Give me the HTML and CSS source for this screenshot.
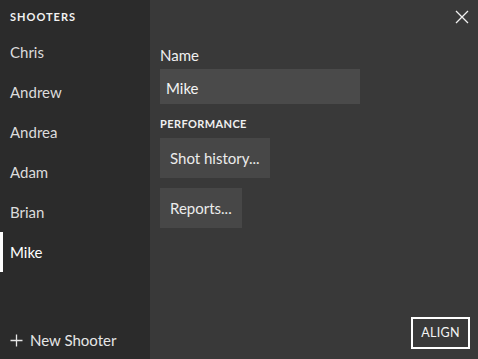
FILE: index.html
```html
<!DOCTYPE html>
<html>
<head>
<meta charset="utf-8">
<link rel="stylesheet" href="styles.css">
</head>
<body>
<div class="app">
  <aside class="sidebar">
    <div class="sidebar-title">SHOOTERS</div>
    <ul class="list">
      <li class="item">Chris</li>
      <li class="item">Andrew</li>
      <li class="item">Andrea</li>
      <li class="item">Adam</li>
      <li class="item">Brian</li>
      <li class="item selected">Mike</li>
    </ul>
    <div class="new-shooter">
      <svg class="plus" width="13" height="13" viewBox="0 0 13 13"><path d="M6.5 0.5V12.5M0.5 6.5H12.5" stroke="#e6e6e6" stroke-width="1.3" fill="none"/></svg>
      <span>New Shooter</span>
    </div>
  </aside>
  <main class="main">
    <button class="close" aria-label="Close">
      <svg width="14" height="14" viewBox="0 0 14 14"><path d="M1 1L13 13M13 1L1 13" stroke="#f0f0f0" stroke-width="1.3" fill="none"/></svg>
    </button>
    <label class="label">Name</label>
    <div class="input">Mike</div>
    <div class="section">PERFORMANCE</div>
    <div class="btn">Shot history...</div>
    <div class="btn">Reports...</div>
    <div class="align">ALIGN</div>
  </main>
</div>
</body>
</html>
```
FILE: styles.css
```css
html, body {
  margin: 0;
  padding: 0;
  height: 100%;
}
body {
  font-family: "Lato", "Open Sans", sans-serif;
  background: #393939;
  color: #e8e8e8;
}
.app {
  display: flex;
  height: 359px;
}
.sidebar {
  width: 150px;
  background: #2b2b2b;
  display: flex;
  flex-direction: column;
}
.sidebar-title {
  height: 32px;
  line-height: 34px;
  padding-left: 10px;
  font-size: 11px;
  font-weight: 700;
  letter-spacing: 1px;
  color: #f2f2f2;
}
.list {
  list-style: none;
  margin: 0;
  padding: 0;
}
.item {
  height: 40px;
  line-height: 40px;
  padding-left: 10px;
  font-size: 15px;
  color: #dcdcdc;
}
.item.selected {
  color: #ffffff;
  box-shadow: inset 3px 0 0 #ffffff;
}
.new-shooter {
  margin-top: auto;
  height: 38px;
  display: flex;
  align-items: center;
  gap: 7px;
  padding-left: 10px;
  font-size: 15px;
  color: #e6e6e6;
}
.main {
  flex: 1;
  position: relative;
  display: flex;
  flex-direction: column;
  align-items: flex-start;
  padding: 45px 8px 10px 10px;
}
.close {
  position: absolute;
  top: 10px;
  right: 9px;
  background: none;
  border: 0;
  padding: 0;
  width: 14px;
  height: 14px;
  display: flex;
}
.label {
  font-size: 15px;
  line-height: 20px;
  color: #f0f0f0;
}
.input {
  margin-top: 4px;
  width: 194px;
  height: 33px;
  padding-top: 2px;
  line-height: 35px;
  padding-left: 6px;
  background: #4a4a4a;
  font-size: 15px;
  color: #f4f4f4;
}
.section {
  margin-top: 12px;
  font-size: 11px;
  line-height: 16px;
  font-weight: 700;
  letter-spacing: 0.4px;
  color: #f0f0f0;
}
.btn {
  margin-top: 6px;
  height: 40px;
  line-height: 40px;
  padding: 0 10px;
  background: #474747;
  font-size: 15px;
  color: #ececec;
}
.btn + .btn {
  margin-top: 10px;
}
.align {
  margin-top: auto;
  align-self: flex-end;
  width: 55px;
  height: 28px;
  line-height: 28px;
  text-align: center;
  border: 2px solid #ffffff;
  font-size: 12.5px;
  font-weight: 400;
  letter-spacing: 0.3px;
  color: #f4f4f4;
}
```
